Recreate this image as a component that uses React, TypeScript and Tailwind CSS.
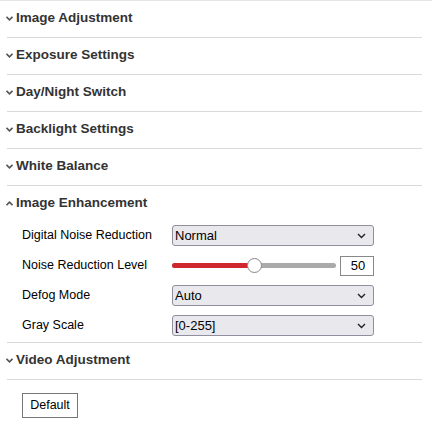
import { useState } from "react";

const closed = [
  "Image Adjustment",
  "Exposure Settings",
  "Day/Night Switch",
  "Backlight Settings",
  "White Balance",
];

function Chevron({ up }: { up?: boolean }) {
  return (
    <svg width="7" height="5" viewBox="0 0 7 5" className="mr-[3px] shrink-0">
      <path
        d={up ? "M0.5 4.2 L3.5 1.2 L6.5 4.2" : "M0.5 0.8 L3.5 3.8 L6.5 0.8"}
        fill="none"
        stroke="#555"
        strokeWidth="1.6"
      />
    </svg>
  );
}

function Header({ title, up }: { title: string; up?: boolean }) {
  return (
    <div className="flex h-[36px] items-center pl-[6px] pb-[2px] text-[13.5px] font-bold text-[#333]">
      <Chevron up={up} />
      {title}
    </div>
  );
}

function Select({ value }: { value: string }) {
  return (
    <div className="flex h-[21px] w-[202px] items-center justify-between rounded-[3px] border border-[#8f8f9d] bg-[#e9e9ed] pl-[2px] pr-[7px] text-[13px] text-black">
      <span>{value}</span>
      <svg width="9" height="6" viewBox="0 0 9 6">
        <path d="M1 1 L4.5 4.5 L8 1" fill="none" stroke="#222" strokeWidth="1.4" />
      </svg>
    </div>
  );
}

export default function App() {
  const [level] = useState(50);
  return (
    <div className="h-[430px] w-[432px] border-t border-[#e6e6e6] bg-white font-['Liberation_Sans',Arial,sans-serif]">
      {closed.map((t) => (
        <div key={t} className="mr-[10px] ml-[7px] border-b border-[#d9d9d9]">
          <div className="-ml-[7px]">
            <Header title={t} />
          </div>
        </div>
      ))}
      <div className="mr-[10px] ml-[7px] border-b border-[#d9d9d9] pb-[6px]">
        <div className="-ml-[7px]">
          <Header title="Image Enhancement" up />
        </div>
        <div className="mt-[3px] flex flex-col gap-[9px] pl-[15px] text-[12.5px] text-black">
          <div className="flex items-center">
            <span className="w-[150px]">Digital Noise Reduction</span>
            <Select value="Normal" />
          </div>
          <div className="flex items-center">
            <span className="w-[150px]">Noise Reduction Level</span>
            <div className="relative flex h-[21px] w-[164px] items-center">
              <div className="flex h-[5px] w-full overflow-hidden rounded-full bg-[#aaaaaa]">
                <div className="h-full bg-[#d0262e]" style={{ width: `${level}%` }} />
              </div>
              <div className="absolute left-[75px] top-[3px] h-[15px] w-[15px] rounded-full border border-[#888] bg-white" />
            </div>
            <div className="ml-[4px] flex h-[20px] w-[34px] items-center justify-center border border-[#888] bg-white pl-[2px] text-[13px] text-black">
              {level}
            </div>
          </div>
          <div className="flex items-center">
            <span className="w-[150px]">Defog Mode</span>
            <Select value="Auto" />
          </div>
          <div className="flex items-center">
            <span className="w-[150px]">Gray Scale</span>
            <Select value="[0-255]" />
          </div>
        </div>
      </div>
      <div className="mr-[10px] ml-[7px] border-b border-[#d9d9d9]">
        <div className="-ml-[7px]">
          <Header title="Video Adjustment" />
        </div>
      </div>
      <div className="pl-[22px] pt-[12px]">
        <button className="h-[25px] w-[56px] border border-[#767676] bg-white text-[12.5px] text-black">
          Default
        </button>
      </div>
    </div>
  );
}
